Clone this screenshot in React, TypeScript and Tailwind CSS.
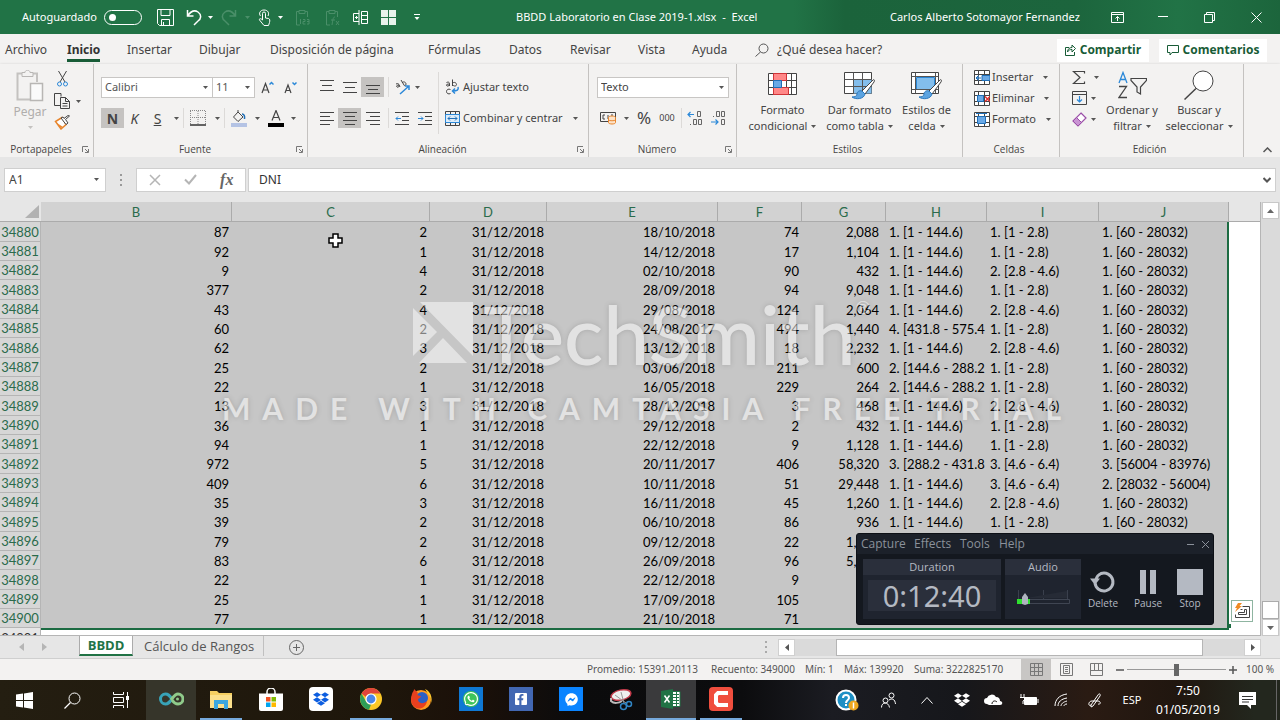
import { ReactNode } from "react";
import { FaDropbox, FaFacebookF, FaFacebookMessenger, FaWhatsapp } from "react-icons/fa";

const rows: string[][] = [
  ["34880", "87", "2", "31/12/2018", "18/10/2018", "74", "2,088", "1. [1 - 144.6)", "1. [1 - 2.8)", "1. [60 - 28032)"],
  ["34881", "92", "1", "31/12/2018", "14/12/2018", "17", "1,104", "1. [1 - 144.6)", "1. [1 - 2.8)", "1. [60 - 28032)"],
  ["34882", "9", "4", "31/12/2018", "02/10/2018", "90", "432", "1. [1 - 144.6)", "2. [2.8 - 4.6)", "1. [60 - 28032)"],
  ["34883", "377", "2", "31/12/2018", "28/09/2018", "94", "9,048", "1. [1 - 144.6)", "1. [1 - 2.8)", "1. [60 - 28032)"],
  ["34884", "43", "4", "31/12/2018", "29/08/2018", "124", "2,064", "1. [1 - 144.6)", "2. [2.8 - 4.6)", "1. [60 - 28032)"],
  ["34885", "60", "2", "31/12/2018", "24/08/2017", "494", "1,440", "4. [431.8 - 575.4", "1. [1 - 2.8)", "1. [60 - 28032)"],
  ["34886", "62", "3", "31/12/2018", "13/12/2018", "18", "2,232", "1. [1 - 144.6)", "2. [2.8 - 4.6)", "1. [60 - 28032)"],
  ["34887", "25", "2", "31/12/2018", "03/06/2018", "211", "600", "2. [144.6 - 288.2", "1. [1 - 2.8)", "1. [60 - 28032)"],
  ["34888", "22", "1", "31/12/2018", "16/05/2018", "229", "264", "2. [144.6 - 288.2", "1. [1 - 2.8)", "1. [60 - 28032)"],
  ["34889", "13", "3", "31/12/2018", "28/12/2018", "3", "468", "1. [1 - 144.6)", "2. [2.8 - 4.6)", "1. [60 - 28032)"],
  ["34890", "36", "1", "31/12/2018", "29/12/2018", "2", "432", "1. [1 - 144.6)", "1. [1 - 2.8)", "1. [60 - 28032)"],
  ["34891", "94", "1", "31/12/2018", "22/12/2018", "9", "1,128", "1. [1 - 144.6)", "1. [1 - 2.8)", "1. [60 - 28032)"],
  ["34892", "972", "5", "31/12/2018", "20/11/2017", "406", "58,320", "3. [288.2 - 431.8", "3. [4.6 - 6.4)", "3. [56004 - 83976)"],
  ["34893", "409", "6", "31/12/2018", "10/11/2018", "51", "29,448", "1. [1 - 144.6)", "3. [4.6 - 6.4)", "2. [28032 - 56004)"],
  ["34894", "35", "3", "31/12/2018", "16/11/2018", "45", "1,260", "1. [1 - 144.6)", "2. [2.8 - 4.6)", "1. [60 - 28032)"],
  ["34895", "39", "2", "31/12/2018", "06/10/2018", "86", "936", "1. [1 - 144.6)", "1. [1 - 2.8)", "1. [60 - 28032)"],
  ["34896", "79", "2", "31/12/2018", "09/12/2018", "22", "1,896", "", "", ""],
  ["34897", "83", "6", "31/12/2018", "26/09/2018", "96", "5,976", "", "", ""],
  ["34898", "22", "1", "31/12/2018", "22/12/2018", "9", "", "", "", ""],
  ["34899", "25", "1", "31/12/2018", "17/09/2018", "105", "", "", "", ""],
  ["34900", "77", "1", "31/12/2018", "21/10/2018", "71", "", "", "", ""],
];

const columns = [
  { name: "B", width: "w-[191px]" },
  { name: "C", width: "w-[198px]" },
  { name: "D", width: "w-[117px]" },
  { name: "E", width: "w-[171px]" },
  { name: "F", width: "w-[84px]" },
  { name: "G", width: "w-[84px]" },
  { name: "H", width: "w-[101px]" },
  { name: "I", width: "w-[112px]" },
  { name: "J", width: "w-[130px]" },
];

const tabs = [
  { name: "Archivo", width: "w-[62px]" },
  { name: "Inicio", width: "w-[60px]" },
  { name: "Insertar", width: "w-[72px]" },
  { name: "Dibujar", width: "w-[71px]" },
  { name: "Disposición de página", width: "w-[158px]" },
  { name: "Fórmulas", width: "w-[81px]" },
  { name: "Datos", width: "w-[61px]" },
  { name: "Revisar", width: "w-[68px]" },
  { name: "Vista", width: "w-[54px]" },
  { name: "Ayuda", width: "w-[63px]" },
];

const stats = [
  { text: "Promedio: 15391.20113", width: "w-[124px]" },
  { text: "Recuento: 349000", width: "w-[94px]" },
  { text: "Mín: 1", width: "w-[39px]" },
  { text: "Máx: 139920", width: "w-[70px]" },
  { text: "Suma: 3222825170", width: "w-[107px]" },
];

type IconProps = { w: number; h: number; className?: string; children: ReactNode };

function Icon({ w, h, className = "", children }: IconProps) {
  return (
    <svg width={w} height={h} viewBox={`0 0 ${w} ${h}`} fill="none" stroke="currentColor" className={`shrink-0 ${className}`} aria-hidden="true">
      {children}
    </svg>
  );
}

function Caret({ className = "text-[#555]" }: { className?: string }) {
  return (
    <Icon w={5} h={3} className={className}>
      <path d="M0 0h5L2.500 3z" fill="currentColor" stroke="none" />
    </Icon>
  );
}

function CaretBox({ className = "w-3" }: { className?: string }) {
  return (
    <span className={`flex shrink-0 items-center justify-center ${className}`}>
      <Caret />
    </span>
  );
}

function Divider() {
  return <span className="h-5 w-px shrink-0 bg-[#dcdad8]" />;
}

function Tool({ label, className, children }: { label: string; className: string; children: ReactNode }) {
  return (
    <button aria-label={label} className={`flex h-5 shrink-0 items-center justify-center ${className}`}>
      {children}
    </button>
  );
}

function Group({ label, width, launcher, children }: { label: string; width: string; launcher?: boolean; children: ReactNode }) {
  return (
    <section className={`flex shrink-0 flex-col border-r border-[#c4c2c0] ${width}`}>
      <div className="flex-1">{children}</div>
      <div className="flex h-4 items-center pr-1 font-['Open_Sans',sans-serif]">
        <span className="flex-1 text-center text-[10px] text-[#484644]">{label}</span>
        {launcher && (
          <button aria-label={`Opciones de ${label}`}>
            <Icon w={7} h={7} className="text-[#777]">
              <path d="M.5 6V.5H6M3 3l3 3M6.500 3v3.500H3" />
            </Icon>
          </button>
        )}
      </div>
    </section>
  );
}

function Lines({ d, active }: { d: "top" | "middle" | "bottom" | "left" | "center" | "right"; active?: boolean }) {
  const paths = {
    top: "M0 .5h14M2 5.500h10M0 10.500h14",
    middle: "M0 2.500h14M2 7.500h10M0 12.500h14",
    bottom: "M0 5.500h14M2 9.500h10M0 13.500h14",
    left: "M0 1.500h14M0 5.500h10M0 9.500h14M0 13.500h10",
    center: "M0 1.500h14M2 5.500h10M0 9.500h14M2 13.500h10",
    right: "M0 1.500h14M4 5.500h10M0 9.500h14M4 13.500h10",
  };
  return (
    <Tool label={`Alinear ${d}`} className={active ? "w-[23px] bg-[#c5c3c1]" : "w-[23px]"}>
      <Icon w={14} h={15} className="text-[#444]">
        <path d={paths[d]} />
      </Icon>
    </Tool>
  );
}

function Brush() {
  return (
    <>
      <path d="M29 9c1-1 2 0 1 2l-9 12-3-3z" fill="#fff" stroke="#444" />
      <path d="M18 20c-3-1-5 1-5 3s-2 3-5 3c4 3 12 2 13-3z" fill="#5ba3e0" stroke="#2b78bd" />
    </>
  );
}

function BigButton({ width, lines, icon }: { width: string; lines: [string, string]; icon: ReactNode }) {
  return (
    <button className={`flex shrink-0 flex-col items-center text-[11px] leading-4 text-[#444] ${width}`}>
      <span className="flex h-8 items-center">{icon}</span>
      <span className="whitespace-nowrap pt-px">{lines[0]}</span>
      <span className="flex items-center gap-1 whitespace-nowrap">
        {lines[1]}
        <Caret />
      </span>
    </button>
  );
}

function TitleBar() {
  return (
    <header className="flex h-[34px] shrink-0 items-center bg-[linear-gradient(90deg,#217346_0%,#217346_62%,#1b633b_66%,#1c653d_84%,#217346_92%,#1c653c_100%)] text-[11px] text-white">
      <label className="flex w-[151px] shrink-0 items-center gap-1 pl-[22px]">
        <span className="w-[78px] whitespace-nowrap">Autoguardado</span>
        <span className="flex h-[15px] w-[38px] items-center rounded-full border border-white pl-1">
          <input type="checkbox" className="size-[7px] appearance-none rounded-full bg-white" />
        </span>
      </label>
      <button aria-label="Guardar" className="flex w-7 justify-center">
        <Icon w={17} h={17}>
          <path d="M.5.5h16v16h-14l-2-2zM4 .5v6h9v-6M4.500 16.500v-6h8v6M6.500 13v3" />
        </Icon>
      </button>
      <button aria-label="Deshacer" className="flex w-[29px] justify-center">
        <Icon w={16} h={17}>
          <path d="M1.500 1v6h6M1.500 7C5 2 9 1 12 3c4 3 3 7 0 9l-4 4" strokeWidth="1.500" />
        </Icon>
      </button>
      <Caret className="text-white" />
      <button aria-label="Rehacer" className="flex w-8 justify-center text-[#4a8f69]">
        <Icon w={16} h={17}>
          <path d="M14.500 1v6h-6M14.500 7C11 2 7 1 4 3 0 6 1 10 4 12l4 4" strokeWidth="1.500" />
        </Icon>
      </button>
      <Caret className="text-[#4a8f69]" />
      <button aria-label="Modo mouse o táctil" className="flex w-7 justify-center">
        <Icon w={13} h={17}>
          <path d="M4.500 11V4.500a1.500 1.500 0 013 0V9l3 .5c1.500.5 1.500 2 1 4l-1 3H6L1.500 11c-.5-1.500 1-2 3 0M2.500 7C.5 4.500 2 1 6 1s5.500 3 4 6" />
        </Icon>
      </button>
      <Caret className="text-white" />
      <button aria-label="Pegar valores" className="flex w-[38px] justify-center text-[#4a8f69]">
        <Icon w={15} h={17}>
          <path d="M5 16H1.500V2.500H4m6 0h2.500V8M4 1.500h6v3H4z" />
          <path d="M5.500 10v5M8 10.500h2v2H8v2.500h2.500M12 10.500h2V15h-2M12 12.500h2" />
        </Icon>
      </button>
      <button aria-label="Pegar fórmulas" className="flex w-[22px] justify-center text-[#4a8f69]">
        <Icon w={15} h={17}>
          <path d="M5 16H1.500V2.500H4m6 0h2.500V8M4 1.500h6v3H4zM10 8c-2 0-2 2-3 8M6 11h4M11 12l3 4M14 12l-3 4" />
        </Icon>
      </button>
      <button aria-label="Insertar celdas" className="flex w-[34px] justify-center">
        <Icon w={17} h={15}>
          <path d="M9.500 1.500h6v12h-6zM9.500 5.500h6M9.500 9.500h6M7 3.500H1.500v8H7M7 0v15M3 7.500h3M4.500 6v3" />
        </Icon>
      </button>
      <button aria-label="Inmovilizar paneles" className="flex w-[22px] justify-center">
        <Icon w={15} h={15}>
          <path d="M0 0h15v15H0z" fill="#e8f3ec" stroke="none" />
          <path d="M7.500 0v15M0 7.500h15" stroke="#217346" />
        </Icon>
      </button>
      <button aria-label="Personalizar barra" className="flex w-9 justify-center">
        <Icon w={6} h={7}>
          <path d="M0 .5h6" />
          <path d="M.5 3h5L3 6z" fill="#fff" stroke="none" />
        </Icon>
      </button>
      <h1 className="flex-1 whitespace-pre pl-[81px]">BBDD Laboratorio en Clase 2019-1.xlsx  -  Excel</h1>
      <span className="w-[205px] whitespace-nowrap pl-px">Carlos Alberto Sotomayor Fernandez</span>
      <button aria-label="Opciones de la cinta" className="flex w-[46px] justify-center">
        <Icon w={13} h={11}>
          <path d="M.5.5h12v10H.5zM.5 2.500h12M6.500 9V4.500M4.500 6.500l2-2 2 2" />
        </Icon>
      </button>
      <button aria-label="Minimizar" className="flex w-[46px] justify-center">
        <Icon w={10} h={2}>
          <path d="M0 .5h10" />
        </Icon>
      </button>
      <button aria-label="Restaurar" className="flex w-[46px] justify-center">
        <Icon w={11} h={11}>
          <path d="M.5 2.500h8v8h-8zM2.500 2V.5h8v8H9" />
        </Icon>
      </button>
      <button aria-label="Cerrar" className="flex w-[48px] justify-center">
        <Icon w={11} h={11}>
          <path d="M.5.5l10 10M10.500.5l-10 10" />
        </Icon>
      </button>
    </header>
  );
}

function TabBar() {
  return (
    <nav className="flex h-[30px] shrink-0 items-center bg-[#f3f2f1] pl-[5px] pt-0.5 text-[12px] text-[#444]">
      {tabs.map((tab) => (
        <a key={tab.name} href="#" className={`flex shrink-0 items-center whitespace-nowrap ${tab.width}`}>
          {tab.name === "Inicio" ? (
            <span className="border-b-[3px] border-[#185c37] pt-[3px] font-bold text-[#333]">{tab.name}</span>
          ) : (
            tab.name
          )}
        </a>
      ))}
      <label className="flex flex-1 items-center gap-2">
        <Icon w={14} h={14} className="text-[#555]">
          <circle cx="8.500" cy="5.500" r="4.500" />
          <path d="M5.500 9l-5 4.500" />
        </Icon>
        <input aria-label="Buscar comandos" placeholder="¿Qué desea hacer?" className="w-40 bg-transparent placeholder:text-[#444]" />
      </label>
      <div className="flex gap-2.5 pr-[13px] font-['Open_Sans',sans-serif] font-bold text-[#185c37]">
        <button className="flex h-[23px] w-[92px] items-center justify-center gap-1 bg-white">
          <Icon w={11} h={12}>
            <path d="M4 3.500H.5v8h9V8M2.500 8c0-3 2-4.500 4.500-4.500V1l3.500 3.500L7 8V5.500C5 5.500 3.500 6 2.500 8z" />
          </Icon>
          Compartir
        </button>
        <button className="flex h-[23px] w-[108px] items-center justify-center gap-1 bg-white">
          <Icon w={12} h={11}>
            <path d="M.5.5h11v7H5l-2 2.500V7.500H.5z" />
          </Icon>
          Comentarios
        </button>
      </div>
    </nav>
  );
}

function ClipboardGroup() {
  return (
    <Group label="Portapapeles" width="w-[94px]" launcher>
      <div className="flex pt-1.5">
        <button className="flex w-[54px] flex-col items-center pl-1.5 text-[12px] leading-5 text-[#b0aeac]">
          <Icon w={28} h={32}>
            <path d="M6 3.500H1.500v26H14M16 3.500h5V12" fill="none" strokeWidth="2" stroke="#c4c2c0" />
            <path d="M6 6.500v-4h3c0-3 5-3 5 0h3v4z" fill="#f3f2f1" stroke="#b8b6b4" />
            <path d="M14.500 13.500h12v17h-12z" fill="#fafafa" stroke="#b8b6b4" strokeWidth="1.500" />
          </Icon>
          <span>Pegar</span>
          <Caret className="mt-1 text-[#c4c2c0]" />
        </button>
        <div className="flex flex-col gap-1.5 pt-px">
          <button aria-label="Cortar" className="flex w-4 justify-center">
            <Icon w={11} h={16}>
              <path d="M1.500 0L8 11M9.500 0L3 11" stroke="#444" />
              <circle cx="2.500" cy="13" r="2" stroke="#2b88d8" />
              <circle cx="8.500" cy="13" r="2" stroke="#2b88d8" />
            </Icon>
          </button>
          <button aria-label="Copiar" className="flex items-center gap-1.5">
            <Icon w={16} h={16} className="text-[#444]">
              <path d="M6 12.500H.5V.5H7v3M6.500 4.500h5l4 4v7h-9zM11.500 4.500v4h4M8.500 10.500h5M8.500 13h5" />
            </Icon>
            <Caret />
          </button>
          <button aria-label="Copiar formato">
            <Icon w={16} h={15}>
              <path d="M8 2.500l-6.500 4 5.500 7.500 5-4.500z" fill="#fff" stroke="#e8852c" strokeWidth="1.500" />
              <path d="M7 3l5 6.500 2-1.500-2.500-3.500L15.500 1 14 .5l-4 3L9 2z" fill="#fff" stroke="#444" />
              <path d="M3 8l4 5 2-1z" fill="#e8852c" stroke="none" />
            </Icon>
          </button>
        </div>
      </div>
    </Group>
  );
}

function FontGroup() {
  return (
    <Group label="Fuente" width="w-[214px]" launcher>
      <div className="flex items-center pl-[7px] pt-[13px]">
        <span className="flex h-[21px] w-[112px] items-center border border-[#c8c6c4] bg-white pr-1">
          <select aria-label="Fuente" className="min-w-0 flex-1 appearance-none pl-[3px] text-[11px] text-[#555]">
            <option>Calibri</option>
          </select>
          <Caret />
        </span>
        <span className="-ml-px flex h-[21px] w-[43px] items-center border border-[#c8c6c4] bg-white pr-1">
          <select aria-label="Tamaño de fuente" className="min-w-0 flex-1 appearance-none pl-[3px] text-[11px] text-[#555]">
            <option>11</option>
          </select>
          <Caret />
        </span>
        <Tool label="Aumentar tamaño" className="w-[25px]">
          <Icon w={13} h={13}>
            <path d="M1 12L4.500 2.500 8 12M2 9h5" stroke="#444" strokeWidth="1.200" />
            <path d="M8.500 3.500l2-2 2 2" stroke="#2b88d8" strokeWidth="1.500" />
          </Icon>
        </Tool>
        <Tool label="Reducir tamaño" className="w-[21px]">
          <Icon w={13} h={13}>
            <path d="M1 12l3-8 3 8M2 9.500h4" stroke="#444" strokeWidth="1.200" />
            <path d="M8.500 1.500l2 2 2-2" stroke="#2b88d8" strokeWidth="1.500" />
          </Icon>
        </Tool>
      </div>
      <div className="flex items-center pl-[7px] pt-2.5 text-[14px] text-[#444]">
        <Tool label="Negrita" className="w-[23px] bg-[#c5c3c1] font-bold">N</Tool>
        <Tool label="Cursiva" className="w-[21px] italic">K</Tool>
        <Tool label="Subrayado" className="w-[25px] underline">S</Tool>
        <CaretBox className="w-[13px]" />
        <Divider />
        <Tool label="Bordes" className="w-[27px]">
          <Icon w={16} h={16}>
            <path d="M.5 1v13M15.500 1v13M8 1v13M0 .5h16M0 7.500h16" stroke="#888" strokeDasharray="1 1" />
            <path d="M0 15h16" stroke="#333" strokeWidth="1.500" />
          </Icon>
        </Tool>
        <CaretBox className="w-[13px]" />
        <Divider />
        <Tool label="Color de relleno" className="w-[27px]">
          <Icon w={16} h={17}>
            <path d="M7 2l5 5-5 4.500L2.500 7zM7 2V0" stroke="#444" />
            <path d="M11 4c2 0 3 2 2.500 5" stroke="#1f6fb8" strokeWidth="1.500" />
            <path d="M0 13h16v4H0z" fill="#b4c3e4" stroke="none" />
          </Icon>
        </Tool>
        <CaretBox className="w-[10px]" />
        <Tool label="Color de fuente" className="w-[27px]">
          <Icon w={16} h={17}>
            <path d="M4 10.500L8 .5l4 10M5.500 7.500h5" stroke="#444" strokeWidth="1.200" />
            <path d="M0 13h16v4H0z" fill="#000" stroke="none" />
          </Icon>
        </Tool>
        <CaretBox className="w-2" />
      </div>
    </Group>
  );
}

function AlignGroup() {
  return (
    <Group label="Alineación" width="w-[281px]" launcher>
      <div className="flex">
        <div className="w-[130px] pt-[13px]">
          <div className="flex items-center pl-[7px]">
            <Lines d="top" />
            <Lines d="middle" />
            <Lines d="bottom" active />
            <span className="w-1" />
            <Divider />
            <Tool label="Orientación" className="w-[26px]">
              <Icon w={17} h={16} className="text-[#444]">
                <path d="M2 5c2-1 3 0 3 1l1 2M5 6C3 6 2 7 3 8s3-1 2-2M7 1l3 5M8 4c1-2 4-1 4 1s-2 2-2 1" />
                <path d="M6 15l9-8M11 7h4v4" stroke="#2b88d8" strokeWidth="1.500" />
              </Icon>
            </Tool>
            <Caret />
          </div>
          <div className="flex items-center pl-[7px] pt-[11px]">
            <Lines d="left" />
            <Lines d="center" active />
            <Lines d="right" />
            <span className="w-1" />
            <Divider />
            <Tool label="Disminuir sangría" className="w-[25px]">
              <Icon w={14} h={13}>
                <path d="M0 .5h14M7 4.500h7M7 8.500h7M0 12.500h14" stroke="#444" />
                <path d="M6 6.500H1M3 4.500l-2 2 2 2" stroke="#2b88d8" />
              </Icon>
            </Tool>
            <Tool label="Aumentar sangría" className="w-[21px]">
              <Icon w={14} h={13}>
                <path d="M0 .5h14M7 4.500h7M7 8.500h7M0 12.500h14" stroke="#444" />
                <path d="M0 6.500h5M3 4.500l2 2-2 2" stroke="#2b88d8" />
              </Icon>
            </Tool>
          </div>
        </div>
        <div className="mt-2 h-[62px] w-px bg-[#dcdad8]" />
        <div className="flex-1 pl-1.5 pt-[13px] text-[11px] text-[#444]">
          <button className="flex h-5 items-center gap-[3px] whitespace-nowrap">
            <Icon w={15} h={16}>
              <path d="M1.500 3.500c2-1 3 0 3 1V7M4.500 5C2 5 1 5.500 1.500 6.500s2.500.5 3-.5M7.500.5V7M7.500 4.500c1-2 4-1 4 1s-3 2-4 0M5.500 10.500c-2-1-4 0-4 2s2 3 4 2" stroke="#444" />
              <path d="M13 8c1 3-1 4-5 4M10 9.500L7.500 12l2.500 2.500" stroke="#2b88d8" strokeWidth="1.500" />
            </Icon>
            Ajustar texto
          </button>
          <div className="flex h-[42px] items-center">
            <button className="flex w-[124px] items-center gap-[3px] whitespace-nowrap">
              <Icon w={15} h={15}>
                <path d="M.5.5h14v14H.5zM5.500.5v3M10.500.5v3M5.500 11.500v3M10.500 11.500v3" stroke="#444" />
                <path d="M.5 3.500h14v8H.5z" fill="#dcecf9" stroke="#2b88d8" />
                <path d="M3 7.500h9M5 5.500l-2 2 2 2M10 5.500l2 2-2 2" stroke="#1f6fb8" />
              </Icon>
              Combinar y centrar
            </button>
            <CaretBox />
          </div>
        </div>
      </div>
    </Group>
  );
}

function NumberGroup() {
  return (
    <Group label="Número" width="w-[148px]" launcher>
      <div className="flex pl-2 pt-[13px]">
        <span className="flex h-[21px] w-[132px] items-center border border-[#c8c6c4] bg-white pr-1">
          <select aria-label="Formato de número" className="min-w-0 flex-1 appearance-none pl-[3px] text-[11px] text-[#444]">
            <option>Texto</option>
          </select>
          <Caret />
        </span>
      </div>
      <div className="flex items-center pl-2 pt-2.5 text-[#444]">
        <Tool label="Formato de contabilidad" className="w-[23px]">
          <Icon w={17} h={13}>
            <path d="M.5.5h15v9H.5zM5 3H3v4h2M8 3v4M11 3h2" stroke="#444" />
            <path d="M8.500 5.500c0-2 7-2 7 0v5c0 2-7 2-7 0zM8.500 8c1 1 6 1 7 0" fill="#fde3c8" stroke="#e8852c" />
          </Icon>
        </Tool>
        <CaretBox />
        <Tool label="Estilo porcentual" className="w-6 text-[17px]">%</Tool>
        <Tool label="Estilo millares" className="w-[22px] text-[9px]">000</Tool>
        <span className="w-[3px]" />
        <Divider />
        <Tool label="Aumentar decimales" className="w-[26px]">
          <Icon w={16} h={16}>
            <path d="M1 4.500h6M3.500 2L1 4.500 3.500 7" stroke="#2b88d8" strokeWidth="1.200" />
            <path d="M10.500 1.500h3v5h-3zM6.500 9.500h3v5h-3zM11.500 9.500h3v5h-3zM3.500 14v1" stroke="#666" />
          </Icon>
        </Tool>
        <Tool label="Disminuir decimales" className="w-5">
          <Icon w={16} h={16}>
            <path d="M6.500 1.500h3v5h-3zM11.500 1.500h3v5h-3zM3.500 6v1M11.500 9.500h3v5h-3z" stroke="#666" />
            <path d="M1 12h7M5.500 9.500L8 12l-2.500 2.500" stroke="#2b88d8" strokeWidth="1.200" />
          </Icon>
        </Tool>
      </div>
    </Group>
  );
}

function StylesGroup() {
  return (
    <Group label="Estilos" width="w-[226px]">
      <div className="flex pt-[5px]">
        <BigButton
          width="w-[91px]"
          lines={["Formato", "condicional"]}
          icon={
            <Icon w={29} h={26}>
              <path d="M.5 1.500h28v21H.5z" fill="#fff" stroke="#444" />
              <path d="M5.500 1.500v21M23.500 1.500v21M18.500 1.500v21M.5 8.500h28M.5 15.500h28" stroke="#444" />
              <path d="M5.500 1.500h13v7h-13zM5.500 15.500h15v7h-15z" fill="#f88" stroke="#d13438" />
              <path d="M5.500 8.500h8v7h-8z" fill="#6aa9e6" stroke="#1f6fb8" />
            </Icon>
          }
        />
        <BigButton
          width="w-[63px]"
          lines={["Dar formato", "como tabla"]}
          icon={
            <Icon w={31} h={29}>
              <path d="M.5 1.500h27v21H.5z" fill="#fff" stroke="#444" />
              <path d="M9.500 8.500h18v14h-18z" fill="#83beec" stroke="none" />
              <path d="M.5 8.500h27M.5 15.500h27M9.500 1.500v21M18.500 1.500v21" stroke="#555" />
              <Brush />
            </Icon>
          }
        />
        <BigButton
          width="w-[71px]"
          lines={["Estilos de", "celda"]}
          icon={
            <Icon w={31} h={29}>
              <path d="M.5 1.500h27v21H.5z" fill="#fff" stroke="#444" />
              <path d="M5.500 6.500h18v12h-18z" fill="#83beec" stroke="#2b88d8" />
              <path d="M4.500 1.500v21M24.500 1.500v21M.5 5.500h27M.5 18.500h27" stroke="#555" />
              <Brush />
            </Icon>
          }
        />
      </div>
    </Group>
  );
}

function CellsGroup() {
  const items = [
    { name: "Insertar", extra: <path d="M8 5.500h8v5H8zM7 8H2M4.500 5.500L2 8l2.500 2.500" fill="#6aa9e6" stroke="#1f6fb8" /> },
    {
      name: "Eliminar",
      extra: (
        <>
          <path d="M3.500 4.500h6v6h-6z" fill="#6aa9e6" stroke="#1f6fb8" />
          <path d="M11 5.500l5 5M16 5.500l-5 5" stroke="#e03030" strokeWidth="1.500" />
        </>
      ),
    },
    { name: "Formato", extra: <path d="M3.500 4.500h8v7h-8zM2 1.500h11" fill="#6aa9e6" stroke="#1f6fb8" /> },
  ];
  return (
    <Group label="Celdas" width="w-[97px]">
      <div className="flex flex-col items-start gap-[5px] pl-[11px] pt-[5px]">
        {items.map((item) => (
          <button key={item.name} className="flex h-4 items-center gap-0.5 text-[11px] text-[#444]">
            <Icon w={16} h={15}>
              <path d="M.5.500h15v14H.5zM.5 4.500h15M.5 10.500h15M4.500.5v14M10.500.5v14" fill="#fff" stroke="#444" />
              {item.extra}
            </Icon>
            {item.name}
            <CaretBox className="w-5" />
          </button>
        ))}
      </div>
    </Group>
  );
}

function EditGroup() {
  return (
    <Group label="Edición" width="w-[184px]">
      <div className="flex">
        <div className="flex w-[42px] flex-col gap-[5px] pl-3 pt-[5px]">
          <button aria-label="Autosuma" className="flex h-4 items-center gap-2">
            <Icon w={14} h={15}>
              <path d="M12.500 3.500V1.500H1.500L8 7.500l-6.500 6h11v-2" stroke="#444" strokeWidth="1.200" />
            </Icon>
            <Caret />
          </button>
          <button aria-label="Rellenar" className="flex h-4 items-center gap-1">
            <Icon w={15} h={14}>
              <path d="M.5.5h14v13H.5zM.5 3.500h14" stroke="#444" />
              <path d="M7.500 5v6M5 8.500L7.500 11 10 8.500" stroke="#2b88d8" strokeWidth="1.200" />
            </Icon>
            <Caret />
          </button>
          <button aria-label="Borrar" className="flex h-4 items-center gap-1">
            <Icon w={15} h={15}>
              <path d="M9 1l5 5-8 8-5-5z" fill="#fff" stroke="#9b4fa8" strokeWidth="1.200" />
              <path d="M4.500 5.500l5 5L6 14 1 9z" fill="#c994d3" stroke="#9b4fa8" />
            </Icon>
            <Caret />
          </button>
        </div>
        <div className="flex pt-[5px]">
          <BigButton
            width="w-[60px]"
            lines={["Ordenar y", "filtrar"]}
            icon={
              <Icon w={29} h={28}>
                <path d="M1 12L5 1.500 9 12M2.500 8.500h5" stroke="#2b88d8" strokeWidth="1.300" />
                <path d="M1 15.500h7.500L1 26.500h8" stroke="#444" strokeWidth="1.300" />
                <path d="M13 7.500h15.500v2L22.500 16v7l-3.500-2v-5l-6-6.500z" stroke="#444" strokeWidth="1.200" />
              </Icon>
            }
          />
          <BigButton
            width="w-[74px]"
            lines={["Buscar y", "seleccionar"]}
            icon={
              <Icon w={30} h={30}>
                <circle cx="19" cy="11" r="10" fill="#fff" stroke="#444" />
                <path d="M12 18.500L.5 29.500" stroke="#444" strokeWidth="1.500" />
              </Icon>
            }
          />
        </div>
      </div>
    </Group>
  );
}

function Ribbon() {
  return (
    <div className="flex h-[93px] shrink-0 bg-[#f3f2f1] shadow-[0_1px_3px_rgba(0,0,0,0.25)]">
      <ClipboardGroup />
      <FontGroup />
      <AlignGroup />
      <NumberGroup />
      <StylesGroup />
      <CellsGroup />
      <EditGroup />
      <div className="flex flex-1 items-end justify-end pb-1 pr-2">
        <button aria-label="Contraer la cinta">
          <Icon w={9} h={6} className="text-[#555]">
            <path d="M.5 5l4-4 4 4" strokeWidth="1.500" />
          </Icon>
        </button>
      </div>
    </div>
  );
}

function FormulaBar() {
  return (
    <div className="flex h-[45px] shrink-0 items-center bg-[#e6e6e6] pl-1 text-[12px] text-[#444]">
      <span className="flex h-6 w-[102px] items-center border border-[#cfcfcf] bg-white pr-1.5">
        <input aria-label="Cuadro de nombres" defaultValue="A1" className="min-w-0 flex-1 pl-1" />
        <Caret />
      </span>
      <Icon w={30} h={12} className="text-[#999]">
        <path d="M14 0h2v2h-2zM14 5h2v2h-2zM14 10h2v2h-2z" fill="currentColor" stroke="none" />
      </Icon>
      <span className="flex h-6 w-[110px] items-center justify-around border border-[#cfcfcf] bg-white">
        <button aria-label="Cancelar">
          <Icon w={12} h={12} className="text-[#b5b5b5]">
            <path d="M1 1l10 10M11 1L1 11" strokeWidth="1.500" />
          </Icon>
        </button>
        <button aria-label="Introducir">
          <Icon w={13} h={11} className="text-[#b5b5b5]">
            <path d="M1 5.500l4 4L12 1" strokeWidth="2" />
          </Icon>
        </button>
        <button aria-label="Insertar función" className="font-['Liberation_Serif',serif] text-[16px] font-bold italic leading-5 text-[#666]">
          fx
        </button>
      </span>
      <span className="ml-0.5 mr-1 flex h-6 flex-1 items-center border border-[#cfcfcf] bg-white pr-1">
        <input aria-label="Barra de fórmulas" defaultValue="DNI" className="min-w-0 flex-1 pl-2.5 text-[#333]" />
        <Icon w={8} h={6} className="text-[#555]">
          <path d="M.5 1L4 4.500 7.500 1" strokeWidth="2" />
        </Icon>
      </span>
    </div>
  );
}

function Watermark() {
  return (
    <div className="pointer-events-none absolute left-[222px] top-[90px] font-['Lato',sans-serif] text-white opacity-50 [text-shadow:0_0_5px_rgba(0,0,0,0.3)]">
      <div className="flex h-[82px] items-center pl-[190px]">
        <svg width="62" height="62" viewBox="0 0 62 62" fill="#fff" aria-hidden="true">
          <path d="M8 0h53v54zM1 6l24 24L1 54zM31 36l24 25H7z" />
        </svg>
        <span className="pl-2 text-[82px] font-medium leading-[80px]">TechSmith</span>
        <span className="self-start pt-0.5 text-[18px]">®</span>
      </div>
      <p className="whitespace-nowrap pt-2.5 text-[30px] font-bold leading-[48px] tracking-[12px]">MADE WITH CAMTASIA FREE TRIAL</p>
    </div>
  );
}

function Recorder() {
  return (
    <div className="absolute bottom-[11px] right-[66px] flex h-[92px] w-[358px] flex-col overflow-hidden rounded-[3px] border border-[#0d1016] bg-[#14181f] font-['Open_Sans',sans-serif] text-[#b4b9c2]">
      <div className="flex h-[20px] items-center bg-[#1c212a] pl-1 pr-1 text-[12px] text-[#8b919b]">
        <button className="w-[53px] text-left">Capture</button>
        <button className="w-[46px] text-left">Effects</button>
        <button className="w-[39px] text-left">Tools</button>
        <button className="flex-1 text-left">Help</button>
        <button aria-label="Minimizar" className="mr-2">
          <Icon w={7} h={7}>
            <path d="M0 3.500h7" />
          </Icon>
        </button>
        <button aria-label="Cerrar">
          <Icon w={7} h={7}>
            <path d="M0 0l7 7M7 0L0 7" />
          </Icon>
        </button>
      </div>
      <div className="flex flex-1 gap-1 px-1.5 py-[5px] text-[11px]">
        <section className="flex w-[138px] flex-col bg-[#1f242f]">
          <h2 className="bg-[#2a2f3b] text-center leading-4">Duration</h2>
          <div className="mx-[5px] mt-[5px] bg-[#2a2f3b] text-center font-['Noto_Sans',sans-serif] text-[29px] leading-[31px]">0:12:40</div>
        </section>
        <section className="flex w-[76px] flex-col bg-[#1f242f]">
          <h2 className="bg-[#2a2f3b] text-center leading-4">Audio</h2>
          <div className="flex flex-1 items-center justify-center">
            <svg width="54" height="18" viewBox="0 0 54 18" fill="none" aria-hidden="true">
              <path d="M2.500 2v9M27.500 2v9M51.500 2v9" stroke="#3a404d" />
              <path d="M10 10l41-7v7z" fill="#262b36" />
              <path d="M1.500 11.500h52v4h-52z" stroke="#3f4552" />
              <path d="M1 11h13v5H1z" fill="#2fe02f" />
              <path d="M6 16V9l3-4 3 4v7l-3 1z" fill="#aeb4be" />
            </svg>
          </div>
        </section>
        <div className="flex flex-1 items-end pb-2 text-[10px] leading-4">
          <button className="flex w-9 flex-col items-center">
            <Icon w={26} h={26}>
              <path d="M5 14a9 9 0 106-9.500 9 9 0 00-5 6" strokeWidth="3" />
              <path d="M0 9.500h10L5 16z" fill="currentColor" stroke="none" />
            </Icon>
            Delete
          </button>
          <button className="flex w-[54px] flex-col items-center">
            <Icon w={16} h={26}>
              <path d="M0 1h6v24H0zM10 1h6v24h-6z" fill="currentColor" stroke="none" />
            </Icon>
            Pause
          </button>
          <button className="flex w-[30px] flex-col items-center">
            <Icon w={26} h={26}>
              <path d="M0 0h26v26H0z" fill="currentColor" stroke="none" />
            </Icon>
            Stop
          </button>
        </div>
      </div>
    </div>
  );
}

function Sheet() {
  return (
    <main className="relative flex min-h-0 flex-1 overflow-hidden bg-[#e6e6e6]">
      <div className="min-w-0 flex-1 overflow-hidden border-b border-r border-[#b5b5b5]">
        <table className="w-full table-fixed border-separate border-spacing-0 font-['Lato',sans-serif] text-[13px]">
          <colgroup>
            <col className="w-[41px]" />
            {columns.map((col) => (
              <col key={col.name} className={col.width} />
            ))}
            <col />
          </colgroup>
          <thead>
            <tr className="h-5 text-[#2a6b4b]">
              <th className="border-b border-[#ababab] p-0">
                <Icon w={14} h={13} className="ml-auto mr-0.5 text-[#b2b2b2]">
                  <path d="M14 0v13H0z" fill="currentColor" stroke="none" />
                </Icon>
              </th>
              {columns.map((col) => (
                <th key={col.name} scope="col" className="border-b border-r border-[#ababab] bg-[#d2d2d2] p-0 font-normal leading-[18px]">
                  {col.name}
                </th>
              ))}
              <td className="border-b border-[#ababab]" />
            </tr>
          </thead>
          <tbody>
            {rows.map((row, i) => (
              <tr key={row[0]} className={i % 3 === 0 ? "h-5" : "h-[19px]"}>
                <th scope="row" className="border-b border-r border-[#b5b5b5] bg-[#d6d6d6] p-0 text-center font-normal leading-[18px] text-[#2a6b4b]">
                  {row[0]}
                </th>
                {row.slice(1).map((value, j) => (
                  <td
                    key={j}
                    className={`overflow-hidden whitespace-nowrap bg-[#c6c6c6] p-0 leading-[18px] text-black ${
                      j > 5 ? "pl-[3px]" : j === 5 ? "pr-[7px] text-right" : "pr-[3px] text-right"
                    } ${j === 8 ? "border-r-2 border-[#1c6b42]" : ""}`}
                  >
                    {value}
                  </td>
                ))}
                <td className="bg-white" />
              </tr>
            ))}
            <tr className="h-[19px] bg-white">
              <th scope="row" className="border-r border-[#b5b5b5] bg-[#e6e6e6] p-0 text-center font-normal leading-[18px] text-[#333]">
                34901
              </th>
              <td colSpan={9} className="border-t-2 border-[#1c6b42]" />
              <td />
            </tr>
          </tbody>
        </table>
      </div>
      <div className="flex w-[19px] shrink-0 flex-col items-center bg-[#dadada] pr-px">
        <button aria-label="Subir" className="flex h-[17px] w-[17px] items-center justify-center border border-[#c8c8c8] bg-white">
          <Icon w={7} h={4} className="text-[#666]">
            <path d="M0 4h7L3.500 0z" fill="currentColor" stroke="none" />
          </Icon>
        </button>
        <div className="flex w-[17px] flex-1 flex-col justify-end">
          <div className="h-[18px] border border-[#ababab] bg-white" />
        </div>
        <button aria-label="Bajar" className="flex h-[17px] w-[17px] items-center justify-center border border-[#c8c8c8] bg-white">
          <Icon w={7} h={4} className="text-[#666]">
            <path d="M0 0h7L3.500 4z" fill="currentColor" stroke="none" />
          </Icon>
        </button>
      </div>

      <Watermark />
      <svg width="16" height="16" viewBox="0 0 16 16" className="absolute left-[328px] top-[31px]" aria-hidden="true">
        <path d="M5 1h5v4h4v5h-4v4H5v-4H1V5h4z" fill="#fff" stroke="#000" strokeWidth="1.500" />
      </svg>
      <span className="absolute bottom-2 right-[49px] size-1 bg-[#1c6b42]" />
      <button aria-label="Análisis rápido" className="absolute bottom-3.5 right-[27px] flex size-[22px] items-center justify-center border border-[#8fb5a1] bg-white">
        <Icon w={17} h={16}>
          <path d="M6.500 6.500h2M8.500 3.500h7v11h-14v-3M4.500 11.500h8v-5h-2v3h-6z" stroke="#444" />
          <path d="M4 0h4L5.500 3H8L1 9l2-4H1z" fill="#f08a24" stroke="none" />
        </Icon>
      </button>
      <Recorder />
    </main>
  );
}

function SheetTabs() {
  return (
    <div className="flex h-[23px] shrink-0 items-center border-b border-[#cfcfcf] bg-[#e6e6e6] font-['Open_Sans',sans-serif] text-[13px] text-[#555]">
      <div className="flex w-[79px] gap-[18px] pl-[19px] text-[#b5b5b5]">
        <button aria-label="Hoja anterior">
          <Icon w={5} h={8}>
            <path d="M5 0v8L0 4z" fill="currentColor" stroke="none" />
          </Icon>
        </button>
        <button aria-label="Hoja siguiente">
          <Icon w={5} h={8}>
            <path d="M0 0v8l5-4z" fill="currentColor" stroke="none" />
          </Icon>
        </button>
      </div>
      <button className="h-5 w-[54px] self-start border-x border-b-2 border-x-[#ababab] border-b-[#217346] bg-white font-bold leading-[18px] text-[#217346]">BBDD</button>
      <button className="w-[131px] self-start whitespace-nowrap border-r border-[#c0c0c0] pl-[11px] text-left leading-5">Cálculo de Rangos</button>
      <button aria-label="Hoja nueva" className="ml-[25px]">
        <Icon w={15} h={15} className="text-[#666]">
          <circle cx="7.500" cy="7.500" r="7" />
          <path d="M4 7.500h7M7.500 4v7" />
        </Icon>
      </button>
      <div className="flex-1" />
      <Icon w={2} h={12} className="mr-[11px] text-[#aaa]">
        <path d="M0 0h2v2H0zM0 5h2v2H0zM0 10h2v2H0z" fill="currentColor" stroke="none" />
      </Icon>
      <div className="mr-[19px] flex h-[17px] w-[483px] bg-[#dadada]">
        <button aria-label="Izquierda" className="flex w-[17px] items-center justify-center border border-[#d0d0d0] bg-white">
          <Icon w={4} h={7} className="text-[#555]">
            <path d="M4 0v7L0 3.500z" fill="currentColor" stroke="none" />
          </Icon>
        </button>
        <div className="flex-1 px-[41px]">
          <div className="h-full border border-[#b5b5b5] bg-white" />
        </div>
        <button aria-label="Derecha" className="flex w-[17px] items-center justify-center border border-[#d0d0d0] bg-white">
          <Icon w={4} h={7} className="text-[#555]">
            <path d="M0 0v7l4-3.500z" fill="currentColor" stroke="none" />
          </Icon>
        </button>
      </div>
    </div>
  );
}

function StatusBar() {
  return (
    <footer className="flex h-[21px] shrink-0 items-center justify-end bg-[#f3f2f1] text-[10px] text-[#555]">
      {stats.map((stat) => (
        <span key={stat.text} className={`shrink-0 whitespace-nowrap ${stat.width}`}>
          {stat.text}
        </span>
      ))}
      <button aria-label="Normal" className="flex h-full w-[30px] items-center justify-center bg-[#c8c6c4]">
        <Icon w={13} h={13} className="text-[#777]">
          <path d="M.5.5h12v12H.5zM.5 4.500h12M.5 8.500h12M4.500.5v12M8.500.5v12" />
        </Icon>
      </button>
      <button aria-label="Diseño de página" className="flex w-[30px] justify-center">
        <Icon w={13} h={13} className="text-[#777]">
          <path d="M.5.5h12v12H.5zM3.500 2.500h6v8h-6zM5 4.500h3M5 6.500h3M5 8.500h3" />
        </Icon>
      </button>
      <button aria-label="Vista previa de salto de página" className="flex w-[30px] justify-center">
        <Icon w={13} h={13} className="text-[#777]">
          <path d="M.5.5h12v12H.5zM4.500.5v7h4v-7M.5 7.500h12" />
        </Icon>
      </button>
      <button aria-label="Alejar" className="ml-px flex w-[15px] justify-center">
        <Icon w={8} h={8}>
          <path d="M0 4h8" strokeWidth="1.500" />
        </Icon>
      </button>
      <input
        type="range"
        aria-label="Zoom"
        defaultValue={50}
        className="h-3 w-[99px] appearance-none bg-[linear-gradient(#999,#999)] bg-[length:100%_1px] bg-center bg-no-repeat [&::-webkit-slider-thumb]:h-3 [&::-webkit-slider-thumb]:w-[5px] [&::-webkit-slider-thumb]:appearance-none [&::-webkit-slider-thumb]:bg-[#666]"
      />
      <button aria-label="Acercar" className="flex w-[14px] justify-center">
        <Icon w={8} h={8}>
          <path d="M0 4h8M4 0v8" strokeWidth="1.500" />
        </Icon>
      </button>
      <span className="w-10 whitespace-nowrap pl-1.5">100 %</span>
    </footer>
  );
}

// size and colours come in through className, running programs get the blue underline
function TaskButton({ label, className = "w-[50px] border-transparent", children }: { label: string; className?: string; children: ReactNode }) {
  return (
    <button aria-label={label} className={`flex h-full shrink-0 items-center justify-center border-b-2 ${className}`}>
      {children}
    </button>
  );
}

function Taskbar() {
  return (
    <div className="flex h-10 shrink-0 items-center bg-[linear-gradient(90deg,#241e11_0%,#1e160b_30%,#1b1009_37%,#0b0b0c_45%,#0c0c0e_58%,#1b1c22_65%,#16171b_75%,#2a1b13_85%,#20160f_92%,#23271e_98%)] text-white">
      <button aria-label="Inicio" className="flex w-12 justify-center">
        <Icon w={17} h={17}>
          <path d="M0 2.500l7-1V8H0zM8 1.500L17 0v8H8zM0 9h7v6.500l-7-1zM8 9h9v8l-9-1.500z" fill="#fff" stroke="none" />
        </Icon>
      </button>
      <button aria-label="Buscar" className="flex w-12 justify-center">
        <Icon w={17} h={17}>
          <circle cx="10.500" cy="6.500" r="5.500" />
          <path d="M6.500 10.500l-6 6" strokeWidth="1.300" />
        </Icon>
      </button>
      <button aria-label="Vista de tareas" className="flex w-[50px] justify-center">
        <Icon w={17} h={16}>
          <path d="M.5 0v2.500h10V0M.5 5.500h10v5H.5zM.5 16v-2.500h10V16M14.500 0v16" />
          <path d="M13 4h3v4h-3z" fill="#fff" stroke="none" />
        </Icon>
      </button>
      <TaskButton label="Infinity" className="w-[50px] border-[#36352a] bg-[#36352a]">
        <Icon w={25} h={14}>
          <path d="M13 7C10 3 9 2 6.500 2a5 5 0 000 10C9 12 10 11 13 7" stroke="#38a3b8" strokeWidth="3" />
          <path d="M12 8c3-4 4-6 7-6a5 5 0 010 10c-3 0-4-1-6-4" stroke="#8fca8a" strokeWidth="3" />
          <circle cx="18.500" cy="7" r="1.500" fill="#8fca8a" stroke="none" />
        </Icon>
      </TaskButton>
      <TaskButton label="Explorador" className="mx-1 w-[42px] border-[#76a9dc]">
        <Icon w={22} h={19}>
          <path d="M0 1h7l2 2h13v15H0z" fill="#f5cf62" stroke="none" />
          <path d="M0 5h22v13H0z" fill="#fbe08c" stroke="none" />
          <path d="M4 19v-9h14v9h-4v-5H8v5z" fill="#3ba7e0" stroke="none" />
        </Icon>
      </TaskButton>
      <TaskButton label="Microsoft Store">
        <Icon w={24} h={23}>
          <path d="M8 6V4a4 4 0 018 0v2" strokeWidth="1.500" />
          <path d="M0 5.500h24V21a2 2 0 01-2 2H2a2 2 0 01-2-2z" fill="#fff" stroke="none" />
          <path d="M7 9h4.500v4.500H7z" fill="#f25022" stroke="none" />
          <path d="M12.500 9H17v4.500h-4.500z" fill="#7fba00" stroke="none" />
          <path d="M7 14.500h4.500V19H7z" fill="#00a4ef" stroke="none" />
          <path d="M12.500 14.500H17V19h-4.500z" fill="#ffb900" stroke="none" />
        </Icon>
      </TaskButton>
      <TaskButton label="Dropbox">
        <span className="flex size-6 items-center justify-center rounded-sm bg-white text-[16px] text-[#0d5ee0]">
          <FaDropbox />
        </span>
      </TaskButton>
      <TaskButton label="Chrome" className="mx-1 w-[42px] border-[#76a9dc]">
        <Icon w={22} h={22}>
          <circle cx="11" cy="11" r="11" fill="#fbc727" stroke="none" />
          <path d="M1.500 5.500a11 11 0 0119 0H11a5.500 5.500 0 00-5 3.500z" fill="#e0443a" stroke="none" />
          <path d="M1.500 5.500L6.300 14a5.500 5.500 0 004.700 2.500l-2 5.300A11 11 0 011.500 5.500z" fill="#2e9e58" stroke="none" />
          <circle cx="11" cy="11" r="5" fill="#4a86e8" stroke="#fff" strokeWidth="1.200" />
        </Icon>
      </TaskButton>
      <TaskButton label="Firefox">
        <Icon w={22} h={22}>
          <circle cx="11" cy="12" r="10" fill="#ff9a1f" stroke="none" />
          <circle cx="12" cy="10" r="6" fill="#2b5fc4" stroke="none" />
          <path d="M2 6c1-3 2-3 2-5l4 4c-2 2 1 3 3 3-1 3-3 2-3 4 1 4 6 4 9 1-1 6-6 9-11 7-5-3-6-8-4-14z" fill="#e8401f" stroke="none" />
          <path d="M15 1c5 2 8 8 6 14 0-4-1-7-3-9z" fill="#ffcb2e" stroke="none" />
        </Icon>
      </TaskButton>
      <TaskButton label="WhatsApp">
        <span className="flex size-6 items-center justify-center bg-[#0f78d4] text-[16px]">
          <FaWhatsapp className="rounded-full bg-[#3ec45a]" />
        </span>
      </TaskButton>
      <TaskButton label="Facebook">
        <span className="flex size-6 items-center justify-center bg-[#4267b2]">
          <span className="flex size-3 items-end justify-end rounded-[1px] bg-white pr-px text-[11px] text-[#4267b2]">
            <FaFacebookF />
          </span>
        </span>
      </TaskButton>
      <TaskButton label="Messenger">
        <span className="flex size-6 items-center justify-center bg-[#0a84ff] text-[13px]">
          <FaFacebookMessenger />
        </span>
      </TaskButton>
      <TaskButton label="Recortes">
        <Icon w={23} h={23}>
          <ellipse cx="11" cy="7" rx="10" ry="5" fill="#eee" stroke="#c43a4a" strokeWidth="1.500" transform="rotate(-12 11 7)" />
          <path d="M1 10v3c3 3 8 2 11 0" stroke="#bbb" strokeWidth="2" />
          <path d="M11 4l3 11M5 7l11 8" stroke="#999" />
          <circle cx="13.500" cy="18.500" r="3" stroke="#3185c4" strokeWidth="1.500" />
          <circle cx="19" cy="16" r="2.500" stroke="#3185c4" strokeWidth="1.500" />
        </Icon>
      </TaskButton>
      <TaskButton label="Excel" className="w-[50px] border-[#76a9dc] bg-[#3a3a3c]">
        <Icon w={20} h={20}>
          <path d="M11 2.500h8v15h-8z" fill="#fff" stroke="#207245" />
          <path d="M12 5.500h6M12 8.500h6M12 11.500h6M12 14.500h6M15.500 3v14" stroke="#207245" />
          <path d="M0 2l12-2v20L0 18z" fill="#207245" stroke="none" />
          <path d="M3.500 6.500l5 7M8.500 6.500l-5 7" stroke="#fff" strokeWidth="1.500" />
        </Icon>
      </TaskButton>
      <TaskButton label="Camtasia" className="mx-1 w-[42px] border-[#76a9dc]">
        <span className="flex size-6 items-center justify-center rounded-sm bg-[#f04e3e]">
          <Icon w={15} h={16}>
            <path d="M14 2H4L2 4v8l2 2h10" strokeWidth="4" />
          </Icon>
        </span>
      </TaskButton>
      <div className="flex-1" />
      <div className="flex shrink-0 items-center">
        <button aria-label="Ayuda" className="flex w-[42px] justify-center">
          <Icon w={24} h={22}>
            <circle cx="11" cy="11" r="9.500" fill="#1d8fc4" stroke="#fff" strokeWidth="2" />
            <path d="M8 9c0-4 6-4 6 0 0 2-3 2-3 5M11 15v2" stroke="#fff" strokeWidth="2" />
            <circle cx="18.500" cy="16.500" r="5" fill="#f0a81f" stroke="none" />
            <path d="M18.500 13.500v6" stroke="#fff" strokeWidth="1.500" />
          </Icon>
        </button>
        <button aria-label="Contactos" className="flex w-10 justify-center">
          <Icon w={15} h={16}>
            <circle cx="10.500" cy="3.500" r="2.500" />
            <circle cx="4.500" cy="8.500" r="2.500" />
            <path d="M.5 15.500c0-6 7-6 8 0M8 8c3-2 6-1 6.500 4" />
          </Icon>
        </button>
        <button aria-label="Mostrar iconos ocultos" className="flex w-[38px] justify-center">
          <Icon w={12} h={7}>
            <path d="M.5 6.500l5.500-6 5.500 6" />
          </Icon>
        </button>
        <FaDropbox className="mx-2 size-4" />
        <Icon w={34} h={12}>
          <path d="M9 10a3 3 0 010-6 5 5 0 019-1c3 0 4 2 4 4 3 0 3 4 0 4H11" fill="#fff" stroke="none" />
          <path d="M14 10c0-3 3-4 5-2" stroke="#1b1714" />
        </Icon>
        <Icon w={32} h={12}>
          <path d="M12.500 3.500h12v7h-12z" fill="#fff" />
          <path d="M9 0v3M12 0v3M8 3.500h5v2l-2 1.500v3M26 5v4" />
        </Icon>
        <Icon w={34} h={14}>
          <path d="M11 13C11 7 15 2 23 1M14 13c0-4 3-7 9-8M17 13c0-2 2-4 6-5M20 13c0-1 1-2 3-2" />
        </Icon>
        <Icon w={34} h={15}>
          <path d="M13 12l7-10c1-2 3-1 2 1l-7 10-2 1zM13 12c-3 2-3-4 1-4h6c3 0 3 4 0 3" />
        </Icon>
        <span className="w-10 text-center text-[11px]">ESP</span>
        <time className="w-[72px] text-center text-[12px] leading-[19px]">
          7:50
          <br />
          01/05/2019
        </time>
        <button aria-label="Notificaciones" className="flex w-[46px] justify-center">
          <Icon w={17} h={17}>
            <path d="M0 0h17v13h-5v4l-4-4H0z" fill="#fff" stroke="none" />
            <path d="M3 4.500h11M3 7.500h11M3 10h7" stroke="#333" />
          </Icon>
        </button>
        <span className="ml-1.5 h-10 w-1 border-l border-[#666]" />
      </div>
    </div>
  );
}

export default function App() {
  return (
    <div className="flex h-screen flex-col overflow-hidden bg-[#e6e6e6] font-['Noto_Sans',sans-serif]">
      <TitleBar />
      <TabBar />
      <Ribbon />
      <FormulaBar />
      <Sheet />
      <SheetTabs />
      <StatusBar />
      <Taskbar />
    </div>
  );
}
